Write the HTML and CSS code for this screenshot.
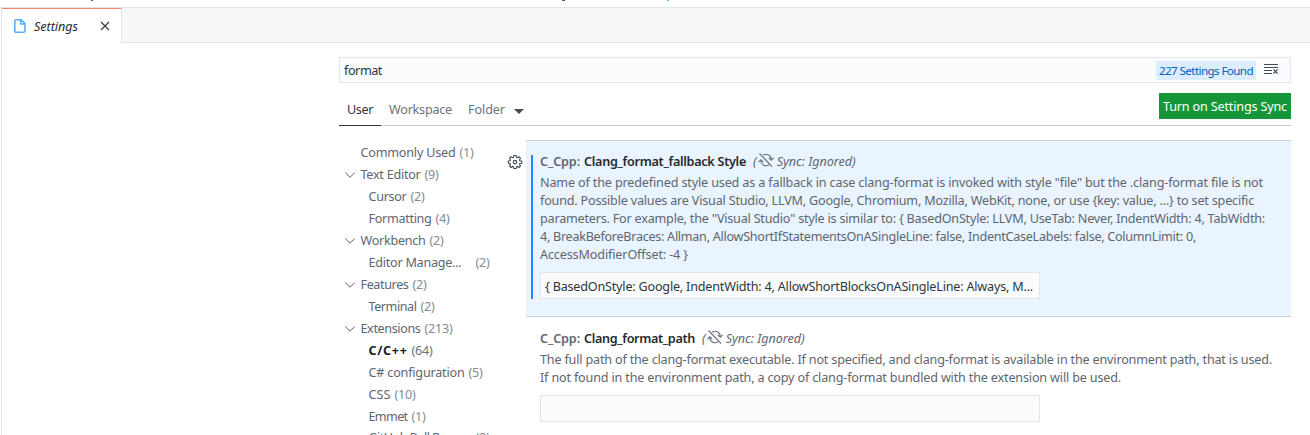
FILE: index.html
```html
<!DOCTYPE html>
<html lang="en">
<head>
<meta charset="utf-8">
<title>Settings</title>
<link rel="stylesheet" href="styles.css">
</head>
<body>
<svg class="defs" width="0" height="0">
  <symbol id="chev" viewBox="0 0 12 12"><path d="M1.2 3.5 6 8.3l4.8-4.8" fill="none" stroke="#586069" stroke-width="1"/></symbol>
  <symbol id="sync" viewBox="0 0 18 16"><g fill="none" stroke="#6a737d" stroke-width="1.1"><path d="M2.500 1.500 15 14.500M6 3.300A5.200 5.200 0 0 1 14.200 8M12 12.700A5.200 5.200 0 0 1 3.800 8M1.300 10.200 3.800 7.700l2.500 2.500M11.700 5.800 14.200 8.300l2.500-2.500"/></g></symbol>
</svg>
<div class="window">
  <div class="titlebar"><i class="bit bit-a"></i><i class="bit bit-b"></i><i class="bit bit-c"></i></div>
  <div class="editor">
    <div class="tabs">
      <div class="tab">
        <svg width="12" height="14" viewBox="0 0 12 14"><path d="M2.2.8h5L11 4.6v7.2q0 1.4-1.4 1.4H2.2Q.8 13.200.8 11.800V2.200Q.8.8 2.200.8zM6.700 1v4H11" fill="none" stroke="#58b0f5" stroke-width="1.600"/></svg>
        <span class="tab-name"><span class="fit">Settings</span></span>
        <svg width="10" height="10" viewBox="0 0 10 10"><path d="m1 1 8 8M9 1 1 9" stroke="#2f363d" stroke-width="1.100"/></svg>
      </div>
      <div class="tab-rest"></div>
    </div>
    <div class="settings">
      <div class="search">
        <span class="query"><span class="fit">format</span></span>
        <span class="count"><span class="fit">227 Settings Found</span></span>
        <svg class="clear" width="15" height="12" viewBox="0 0 15 12"><path d="M0 1.500h14M0 4.500h14M0 7.500h8M0 10.500h8" stroke="#444d56"/><path d="m9.500 6.500 4 4m0-4-4 4" stroke="#444d56" stroke-width="1.100"/></svg>
      </div>
      <div class="scope">
        <div class="scope-tab active"><span class="fit">User</span></div>
        <div class="scope-tab work"><span class="fit">Workspace</span></div>
        <div class="scope-tab folder"><span class="fit">Folder</span></div>
        <i class="caret"></i>
        <div class="sync-btn"><span class="fit">Turn on Settings Sync</span></div>
      </div>
      <div class="body">
        <div class="tree">
          <div class="row"><span class="name w95">Commonly Used</span><span class="num">(1)</span></div>
          <div class="row"><svg class="chev"><use href="#chev"/></svg><span class="name w60">Text Editor</span><span class="num">(9)</span></div>
          <div class="row child"><span class="name w38">Cursor</span><span class="num">(2)</span></div>
          <div class="row child"><span class="name w63">Formatting</span><span class="num">(4)</span></div>
          <div class="row"><svg class="chev"><use href="#chev"/></svg><span class="name w65">Workbench</span><span class="num">(2)</span></div>
          <div class="row child"><span class="name w94">Editor Manage...</span><span class="num far">(2)</span></div>
          <div class="row"><svg class="chev"><use href="#chev"/></svg><span class="name w48">Features</span><span class="num">(2)</span></div>
          <div class="row child"><span class="name w48">Terminal</span><span class="num">(2)</span></div>
          <div class="row"><svg class="chev"><use href="#chev"/></svg><span class="name w60">Extensions</span><span class="num n3">(213)</span></div>
          <div class="row child"><span class="name w40 selected">C/C++</span><span class="num n2 dark">(64)</span></div>
          <div class="row child"><span class="name w96">C# configuration</span><span class="num">(5)</span></div>
          <div class="row child"><span class="name w22">CSS</span><span class="num n2">(10)</span></div>
          <div class="row child"><span class="name w40">Emmet</span><span class="num">(1)</span></div>
          <div class="row child last"><span class="name w94">GitHub Pull Req...</span><span class="num far">(2)</span></div>
        </div>
        <div class="gutter"><svg width="16" height="16" viewBox="0 0 16 16" fill="none" stroke="#444d56" stroke-width="1.150"><path d="M6.800 1.500h2.400l.3 1.800 1 .4 1.500-1 1.500 1.500-1 1.500.4 1 1.800.3v2.200l-1.800.3-.4 1 1 1.500-1.500 1.500-1.500-1-1 .4-.3 1.600H6.800l-.3-1.600-1-.4-1.500 1L2.500 12l1-1.500-.4-1-1.800-.3V7l1.800-.3.4-1-1-1.500L4 2.700l1.500 1 1-.4z"/><circle cx="8" cy="8.100" r="1.700"/></svg></div>
        <div class="list">
          <section class="item focused">
            <div class="title"><span class="cat"><span class="fit">C_Cpp:</span></span><b class="key k1"><span class="fit">Clang_format_fallback Style</span></b><span class="ign"><em>(</em><svg class="sync"><use href="#sync"/></svg><em class="ign-text">Sync: Ignored)</em></span></div>
            <div class="desc">
              <div class="line l1">Name of the predefined style used as a fallback in case clang-format is invoked with style "file" but the .clang-format file is not</div>
              <div class="line l2">found. Possible values are Visual Studio, LLVM, Google, Chromium, Mozilla, WebKit, none, or use {key: value, ...} to set specific</div>
              <div class="line l3">parameters. For example, the "Visual Studio" style is similar to: { BasedOnStyle: LLVM, UseTab: Never, IndentWidth: 4, TabWidth:</div>
              <div class="line l4">4, BreakBeforeBraces: Allman, AllowShortIfStatementsOnASingleLine: false, IndentCaseLabels: false, ColumnLimit: 0,</div>
              <div class="line l5">AccessModifierOffset: -4 }</div>
            </div>
            <div class="input"><div class="line value">{ BasedOnStyle: Google, IndentWidth: 4, AllowShortBlocksOnASingleLine: Always, M...</div></div>
          </section>
          <section class="item">
            <div class="title"><span class="cat"><span class="fit">C_Cpp:</span></span><b class="key k2"><span class="fit">Clang_format_path</span></b><span class="ign"><em>(</em><svg class="sync"><use href="#sync"/></svg><em class="ign-text">Sync: Ignored)</em></span></div>
            <div class="desc">
              <div class="line l6">The full path of the clang-format executable. If not specified, and clang-format is available in the environment path, that is used.</div>
              <div class="line l7">If not found in the environment path, a copy of clang-format bundled with the extension will be used.</div>
            </div>
            <div class="input"></div>
          </section>
        </div>
      </div>
    </div>
  </div>
</div>
<script src="fit.js"></script>
</body>
</html>
```
FILE: fit.js
```js
// Distribute letter spacing so each label fills the width its column reserves.
document.querySelectorAll('.line, .name, .num, .ign-text, .fit').forEach(function (el) {
  var box = el.classList.contains('fit') ? el.parentElement : el;
  var cs = getComputedStyle(box);
  var target = box.clientWidth - parseFloat(cs.paddingLeft) - parseFloat(cs.paddingRight);
  var range = document.createRange();
  range.selectNodeContents(el);
  var natural = range.getBoundingClientRect().width;
  el.style.letterSpacing = ((target - natural) / el.textContent.length) + 'px';
});
```
FILE: styles.css
```css
* { box-sizing: border-box; }
body { margin: 0; background: #fff; color: #5e666f; font: 12.6px/18px "Noto Sans", "Open Sans", sans-serif; overflow: hidden; white-space: nowrap; }
.defs { position: absolute; }
.window { height: 435px; display: flex; flex-direction: column; overflow: hidden; }
.titlebar { height: 8px; flex: none; border-bottom: 1px solid #e1e4e8; position: relative; }
.bit { position: absolute; top: 0; height: 1px; background: #586069; }
.bit-a { left: 91px; width: 2px; }
.bit-b { left: 562px; width: 3px; }
.bit-c { left: 667px; width: 2px; background: #58b0f5; }
.editor { flex: 1; margin-left: 1px; border-left: 1px solid #e1e4e8; }
.tabs { display: flex; height: 35px; }
.tab { width: 120px; display: flex; align-items: center; border-top: 1px solid #f9826c; border-right: 1px solid #e1e4e8; padding: 0 0 0 12px; }
.tab-name { display: block; width: 44px; margin: 2px 22px 0 8px; font-style: italic; color: #24292e; }
.tab svg { flex: none; }
.tab-rest { flex: 1; background: #f6f8fa; border-bottom: 1px solid #e1e4e8; }
.settings { width: 952px; margin: 14px 0 0 337px; }
.search { height: 26px; border: 1px solid #e1e4e8; background: #fafbfc; display: flex; align-items: center; padding-left: 4px; }
.query { width: 38px; margin-top: 2px; color: #2f363d; }
.count { width: 100px; height: 19px; margin-left: 774px; padding: 0 3px; border-radius: 2px; background: #dbedff; color: #005cc5; font-size: 11.6px; line-height: 20px; }
.clear { margin: 0 0 2px 8px; }
.scope { height: 43px; border-bottom: 1px solid #c8c9cb; display: flex; align-items: flex-end; }
.scope-tab { height: 33px; line-height: 33px; margin-bottom: -1px; }
.active { width: 42px; padding: 0 8px; border-bottom: 1px solid #2f363d; color: #2f363d; }
.work { width: 63px; margin-left: 8px; color: #6a737d; }
.folder { width: 37px; margin-left: 16px; color: #6a737d; }
.caret { height: 0; width: 0; margin: 0 0 11px 9px; border: 5px solid transparent; border-top-color: #444d56; border-bottom: 0; }
.sync-btn { width: 132px; height: 26px; line-height: 28px; padding: 0 4px; margin: 0 0 6px auto; background: #159739; color: #fff; }
.body { display: flex; height: 309px; }
.tree { width: 168px; padding-top: 16px; }
.row { height: 22px; padding-left: 21.5px; display: flex; align-items: center; position: relative; }
.child { padding-left: 29.5px; }
.chev { position: absolute; left: 5px; top: 5px; width: 12px; height: 12px; }
.num { width: 14px; margin-left: 4px; color: #858c93; }
.n2 { width: 21px; }
.n3 { width: 28px; }
.far { margin-left: 14px; }
.last { height: 20px; }
.dark { color: #6a737d; }
.selected { color: #1b1f23; font-weight: bold; }
.w22 { width: 22px; } .w38 { width: 38px; } .w40 { width: 39px; } .w48 { width: 48px; }
.w60 { width: 60px; } .w63 { width: 63px; } .w65 { width: 65px; } .w94 { width: 93px; }
.w95 { width: 95px; } .w96 { width: 96px; }
.gutter { width: 19px; padding-top: 28px; }
.list { width: 765px; padding-top: 14px; }
.item { height: 177px; padding: 12px 0 0 14px; border-top: 1px solid transparent; }
.focused { position: relative; background: #e9f4ff; border-top: 1px solid #c8d3de; border-bottom: 1px solid #c8d3de; }
.focused::before { content: ""; position: absolute; left: 5px; top: 14px; width: 2px; height: 144px; background: #2188ff; }
.title { display: flex; height: 18px; margin-bottom: 3px; }
.title, .key { font-weight: 600; }
.cat { width: 40px; margin-right: 4px; }
.key { color: #24292e; }
.k1 { width: 162px; }
.k2 { width: 111px; }
.ign { display: flex; margin-left: 7px; font-weight: 400; align-items: center; }
.ign em { display: block; }
.sync { width: 18px; height: 16px; margin: 0 -1px 4px 0; }
.ign .ign-text { width: 79px; margin-left: 3px; }
.desc { margin-bottom: 8px; }
.line { height: 18px; }
.l1 { width: 723px; } .l2 { width: 714px; } .l3 { width: 725px; } .l4 { width: 656px; } .l5 { width: 148px; }
.l6 { width: 732px; } .l7 { width: 581px; }
.input { width: 500px; height: 27px; border: 1px solid #e1e4e8; background: #fafbfc; padding: 5px 4px 3px; }
.value { width: 488px; color: #2f363d; }
```
